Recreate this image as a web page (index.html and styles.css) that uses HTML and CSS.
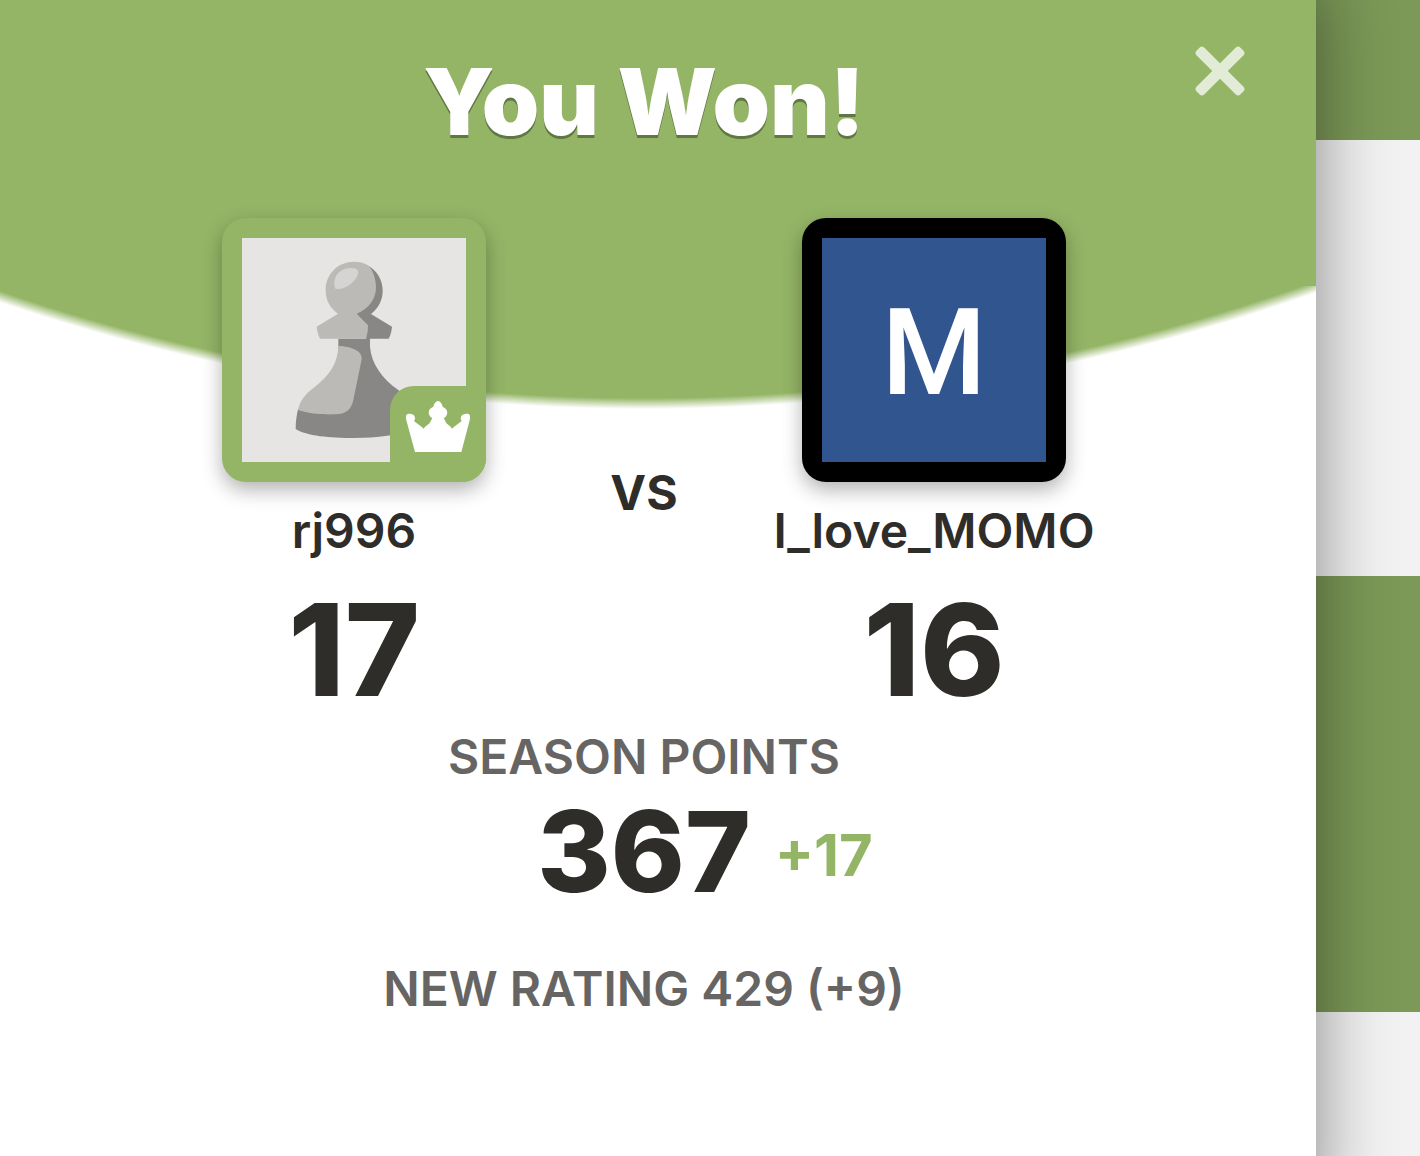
FILE: index.html
```html
<!DOCTYPE html>
<html lang="en">
<head>
<meta charset="utf-8">
<meta name="viewport" content="width=device-width, initial-scale=1">
<title>You Won!</title>
<link rel="stylesheet" href="styles.css">
</head>
<body>
<main class="result" role="dialog" aria-labelledby="result-title">
  <button class="close" type="button" aria-label="Close">
    <svg class="close-icon" viewBox="0 0 50 50" aria-hidden="true">
      <rect x="-6" y="19.5" width="62" height="11" rx="3.5" transform="rotate(45 25 25)"/>
      <rect x="-6" y="19.5" width="62" height="11" rx="3.5" transform="rotate(-45 25 25)"/>
    </svg>
  </button>
  <h1 class="title" id="result-title">You Won!</h1>
  <section class="players">
    <div class="player">
      <div class="avatar avatar-winner">
        <svg class="pawn" viewBox="96 114 672 672" aria-hidden="true">
          <path fill="#888785" d="M470 195C500 210 518 238 518 272C518 300 505 325 483 342L546 380C545 393 542 405 536 416H480V440C484 490 515 535 566 571C595 595 608 640 608 688C570 706 500 714 432 714C360 714 290 708 257 687C257 665 260 645 264 628L390 600L385 437V416H468L440 342Z"/>
          <path fill="#bbbab6" d="M347 270C347 222 384 185 432 185C450 185 464 189 476 197C490 213 498 238 498 262C498 298 475 328 440 341L474 376C474 392 472 404 468 416H330C325 405 321 393 320 380L384 341C360 325 347 300 347 270Z"/>
          <path fill="#bbbab6" d="M385 437C425 440 458 452 455 478L430 600C424 628 408 643 375 643C335 644 295 641 264 630C270 600 288 580 315 560C360 525 384 487 385 437Z"/>
          <path fill="#d5d4d2" d="M376 266C366 242 380 204 424 204C445 204 449 215 440 231C428 252 400 272 376 266Z"/>
        </svg>
        <span class="badge">
          <svg class="crown" viewBox="540 558 288 288" role="img" aria-label="Winner">
            <path fill="#fff" d="M615 756L588 657V648C590 641 597 641 603 642C611 643 616 648 615 657L612 663C618 669 630 675 641 686C648 676 657 675 662 664L667 654C654 648 650 628 670 620C672 610 677 604 684 603C691 604 696 610 698 620C717 628 715 648 701 654L706 664C711 675 720 676 726 686C737 675 749 669 755 663L752 657C752 648 757 643 765 642C771 641 779 641 780 648V657L754 756Z"/>
          </svg>
        </span>
      </div>
      <p class="name">rj996</p>
      <p class="score">17</p>
    </div>
    <p class="versus">vs</p>
    <div class="player">
      <div class="avatar avatar-letter">M</div>
      <p class="name">I_love_MOMO</p>
      <p class="score">16</p>
    </div>
  </section>
  <h2 class="label">SEASON POINTS</h2>
  <p class="points">
    <span class="points-total">367</span>
    <span class="points-gain">+17</span>
  </p>
  <p class="label rating">NEW RATING 429 (+9)</p>
</main>
<aside class="board" aria-hidden="true"></aside>
</body>
</html>
```
FILE: styles.css
```css
:root {
  --green: #94b566;
  --ink: #2f2d29;
}

* {
  box-sizing: border-box;
}

body {
  margin: 0;
  min-height: 100vh;
  display: flex;
  font-family: Inter, "Liberation Sans", sans-serif;
  color: var(--ink);
  overflow-x: hidden;
}

h1, h2, p {
  margin: 0;
}

.result {
  flex: 1;
  position: relative;
  z-index: 1;
  display: flex;
  flex-direction: column;
  align-items: center;
  padding: 50px 28px 48px 0;
  background:
    linear-gradient(var(--green), var(--green)) 0 0 / 100% 286px no-repeat,
    radial-gradient(circle at calc(50% - 14px) -1590px, var(--green) 1988px, #fff 1999px);
  box-shadow: -40px 20px 70px 40px rgba(0, 0, 0, 0.45);
}

.board {
  flex: 0 0 104px;
  background: repeating-linear-gradient(#7c9957 0 436px, #f2f2f2 436px 872px) 0 -296px / 100% 1744px;
}

.close {
  position: absolute;
  top: 46px;
  right: 71px;
  width: 50px;
  height: 50px;
  padding: 0;
  border: 0;
  background: none;
  cursor: pointer;
}

.close-icon {
  display: block;
  width: 50px;
  height: 50px;
  fill: #e1ebd5;
}

.title {
  font-size: 92px;
  line-height: 104px;
  font-weight: 900;
  color: #fff;
  text-shadow: 0 3px 0 #5f7742;
}

.players {
  display: grid;
  grid-template-columns: 330px 250px 330px;
  margin-top: 64px;
}

.player {
  display: flex;
  flex-direction: column;
  align-items: center;
}

.avatar {
  position: relative;
  width: 264px;
  height: 264px;
  padding: 20px;
  border-radius: 24px;
  box-shadow: 0 8px 20px rgba(0, 0, 0, 0.3);
}

.avatar-winner {
  background: linear-gradient(#e6e5e3, #e6e5e3) center / 224px 224px no-repeat var(--green);
}

.avatar-letter {
  background: linear-gradient(#31558f, #31558f) center / 224px 224px no-repeat #000;
  color: #fff;
  font: 500 120px/230px Roboto, sans-serif;
  text-align: center;
}

.pawn {
  display: block;
  width: 224px;
  height: 224px;
}

.badge {
  position: absolute;
  right: 0;
  bottom: 0;
  width: 96px;
  height: 96px;
  border-radius: 24px 0;
  background: var(--green);
}

.crown {
  display: block;
  width: 96px;
  height: 96px;
}

.name {
  margin-top: 21px;
  font-size: 48px;
  line-height: 56px;
  font-weight: 600;
}

.score {
  margin-top: 27px;
  font-size: 128px;
  line-height: 128px;
  font-weight: 800;
}

.versus {
  padding-top: 243px;
  font-size: 48px;
  line-height: 64px;
  font-weight: 700;
  text-align: center;
  text-transform: uppercase;
}

.label {
  margin-top: 15px;
  font-size: 48px;
  line-height: 56px;
  font-weight: 600;
  color: #666563;
}

.points {
  display: grid;
  grid-template-columns: 1fr auto 1fr;
  align-items: center;
  column-gap: 24px;
  width: 100%;
  margin-top: 10px;
}

.points-total {
  grid-column: 2;
  font-size: 112px;
  line-height: 112px;
  font-weight: 800;
}

.points-gain {
  padding-top: 8px;
  font-size: 58px;
  line-height: 56px;
  font-weight: 700;
  color: var(--green);
}

.rating {
  margin-top: 54px;
}
```
